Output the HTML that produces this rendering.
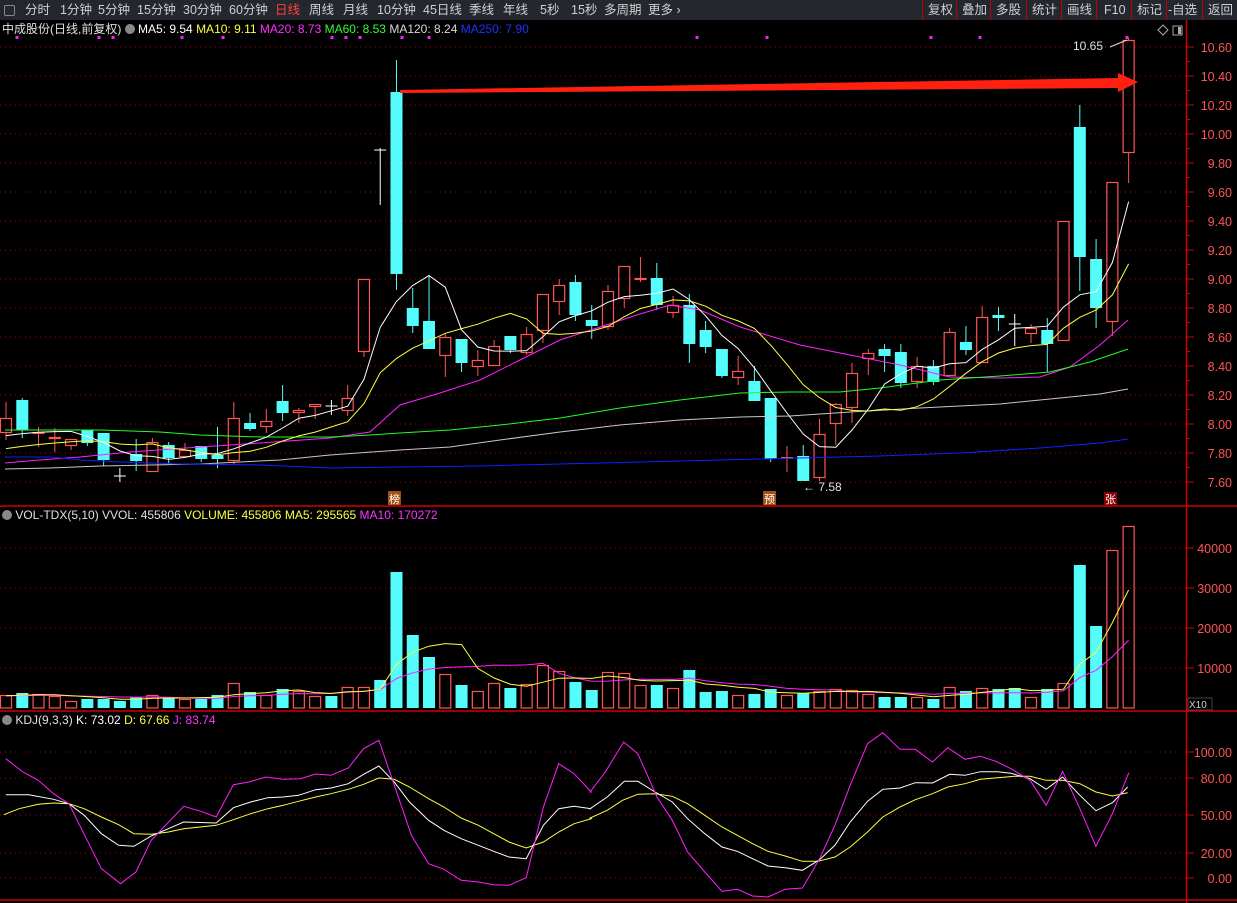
<!DOCTYPE html>
<html><head><meta charset="utf-8">
<style>
html,body{margin:0;padding:0;background:#000;width:1237px;height:903px;overflow:hidden;font-family:"Liberation Sans","Noto Sans CJK SC",sans-serif;}
#tbar{position:absolute;left:0;top:0;width:1237px;height:20px;background:#25272e;color:#d0d0d0;font-size:12.5px;line-height:20px;white-space:nowrap}
#tbar span{position:absolute;top:0}
.sep{position:absolute;top:0;width:1px;height:20px;background:#c00000}
.hdr{position:absolute;font-size:12px;white-space:nowrap;line-height:14px;z-index:2}
#holder{position:absolute;left:0;top:0;width:1237px;height:903px}
#holder svg{position:absolute;left:0;top:0}
</style></head><body>
<div id="holder"></div>
<div id="tbar">
<span style="left:4px;top:5px;width:9px;height:9px;border:1px solid #888;border-radius:2px;line-height:0"></span>
<span style="left:25px">分时</span><span style="left:60px">1分钟</span><span style="left:98px">5分钟</span><span style="left:137px">15分钟</span><span style="left:183px">30分钟</span><span style="left:229px">60分钟</span><span style="left:275px;color:#ff4040">日线</span><span style="left:309px">周线</span><span style="left:343px">月线</span><span style="left:377px">10分钟</span><span style="left:423px">45日线</span><span style="left:469px">季线</span><span style="left:503px">年线</span><span style="left:540px">5秒</span><span style="left:571px">15秒</span><span style="left:604px">多周期</span><span style="left:648px">更多 ›</span>
<div class="sep" style="left:922px"></div><span style="left:928px">复权</span>
<div class="sep" style="left:956px"></div><span style="left:962px">叠加</span>
<div class="sep" style="left:990px"></div><span style="left:996px">多股</span>
<div class="sep" style="left:1026px"></div><span style="left:1032px">统计</span>
<div class="sep" style="left:1061px"></div><span style="left:1067px">画线</span>
<div class="sep" style="left:1096px"></div><span style="left:1104px">F10</span>
<div class="sep" style="left:1131px"></div><span style="left:1137px">标记</span>
<div class="sep" style="left:1166px"></div><span style="left:1168px">-自选</span>
<div class="sep" style="left:1202px"></div><span style="left:1208px">返回</span>
</div>
<div class="hdr" style="left:2px;top:22px;color:#e0e0e0">中成股份(日线,前复权) <span style="display:inline-block;width:10px;height:10px;border-radius:5px;background:#888;vertical-align:-1px"></span> <span style="color:#fff">MA5: 9.54</span> <span style="color:#ffff40">MA10: 9.11</span> <span style="color:#ff30ff">MA20: 8.73</span> <span style="color:#30ff30">MA60: 8.53</span> <span style="color:#d8d8d8">MA120: 8.24</span> <span style="color:#2030ff">MA250: 7.90</span></div>
<div class="hdr" style="left:2px;top:508px;color:#e0e0e0"><span style="display:inline-block;width:10px;height:10px;border-radius:5px;background:#888;vertical-align:-1px"></span> VOL-TDX(5,10) VVOL: 455806 <span style="color:#ffff40">VOLUME: 455806 MA5: 295565</span> <span style="color:#ff30ff">MA10: 170272</span></div>
<div class="hdr" style="left:2px;top:713px;color:#e0e0e0"><span style="display:inline-block;width:10px;height:10px;border-radius:5px;background:#888;vertical-align:-1px"></span> KDJ(9,3,3) <span style="color:#fff">K: 73.02</span> <span style="color:#ffff40">D: 67.66</span> <span style="color:#ff30ff">J: 83.74</span></div>
<script>
(function(){
var s='';
function LN(x1,y1,x2,y2,c,w,d){s+='<line x1="'+x1+'" y1="'+y1+'" x2="'+x2+'" y2="'+y2+'" stroke="'+c+'" stroke-width="'+(w||1)+'"'+(d?' stroke-dasharray="'+d+'"':'')+'/>';}
function PL(pts,c,w){var a=[];for(var i=0;i<pts.length;i++){a.push((+pts[i][0]).toFixed(1)+','+(+pts[i][1]).toFixed(1));}s+='<polyline fill="none" stroke="'+c+'" stroke-width="'+(w||1)+'" points="'+a.join(' ')+'"/>';}
function TX(x,y,t,c,a,fs){s+='<text x="'+x+'" y="'+y+'" fill="'+c+'" font-size="'+(fs||12)+'" font-family="Liberation Sans, sans-serif"'+(a?' text-anchor="'+a+'"':'')+'>'+t+'</text>';}
function XP(i){return 6+16.27*i;}
function MAV(arr,n,pad){var r=[];for(var i=0;i<arr.length;i++){var sum=0;for(var j=i-n+1;j<=i;j++){sum+=(j<0?pad:arr[j]);}r.push([XP(i),sum/n]);}return r;}
var RED='#ff5555',CY='#54fcfc',GR='#b00000';
var i,y;
try{
for(y=47;y<=483;y+=29){LN(0,y,1186,y,GR,1,'1,4');}
[548,588,628,668].forEach(function(yy){LN(0,yy,1186,yy,GR,1,'1,4');});
[752,778,815,853,878].forEach(function(yy){LN(0,yy,1186,yy,GR,1,'1,4');});
var labs=['10.60','10.40','10.20','10.00','9.80','9.60','9.40','9.20','9.00','8.80','8.60','8.40','8.20','8.00','7.80','7.60'];
for(i=0;i<labs.length;i++){var yl=47+29*i;LN(1186,yl,1194,yl,'#d00000');TX(1232,yl+5,labs[i],RED,'end',12.5);}
for(y=47;y<=483;y+=14.5){LN(1186,y,1190,y,'#d00000');}
[['40000',548],['30000',588],['20000',628],['10000',668]].forEach(function(a){LN(1186,a[1],1194,a[1],'#d00000');TX(1232,a[1]+5,a[0],RED,'end',12.5);});
[['100.00',752],['80.00',778],['50.00',815],['20.00',853],['0.00',878]].forEach(function(a){LN(1186,a[1],1194,a[1],'#d00000');TX(1232,a[1]+5,a[0],RED,'end',12.5);});
s+='<rect x="1188" y="698" width="24" height="12" fill="#000" stroke="#888" stroke-width="0.5"/>';TX(1189,708,'X10','#d0d0d0',null,10);
LN(0,506,1237,506,'#d00000',1.5);LN(0,711,1237,711,'#d00000',1.5);LN(0,900,1237,900,'#d00000',1.5);
LN(1186.5,20,1186.5,903,'#d00000',1.5);
[17,99,113,182,223,332,346,360,402,429,697,767,931,980,1127].forEach(function(x){s+='<rect x="'+(x-1.5)+'" y="36" width="3" height="3" fill="#ff20ff"/>';});
}catch(e){}
var CD=[[418,433,402,440,'r'],[400,430,398,438,'c'],[433,434,427,447,'r'],[437,439,428,452,'r'],[439,446,439,450,'r'],[430,443,430,446,'c'],[433,460,433,466,'c'],[476,476,468,482,'w'],[454,461,439,471,'c'],[442,472,438,472,'r'],[445,458,442,465,'c'],[450,457,443,457,'r'],[446,459,446,462,'c'],[455,459,427,468,'c'],[418,461,402,465,'r'],[423,429,413,431,'c'],[421,427,409,433,'r'],[401,413,385,421,'c'],[410,413,408,423,'r'],[404,407,404,419,'r'],[406,406,400,415,'w'],[398,411,385,416,'r'],[279,352,279,357,'r'],[150,150,148,205,'w'],[92,274,60,290,'c'],
[308,326,288,333,'c'],[321,349,275,349,'c'],[337,356,334,377,'r'],[339,363,339,372,'c'],[360,367,350,376,'r'],[346,366,340,366,'r'],[336,350,336,353,'c'],[334,353,327,355,'r'],[294,331,294,343,'r'],[285,302,279,315,'r'],[282,315,275,321,'c'],[320,326,305,339,'c'],[291,327,285,330,'r'],[266,299,266,308,'r'],[278,280,257,282,'r'],[278,305,263,310,'c'],[305,313,296,318,'r'],[305,344,294,363,'c'],[330,347,321,353,'c'],[349,376,349,378,'c'],[371,378,356,385,'r'],[381,401,366,401,'c'],[398,459,398,462,'c'],[458,458,446,472,'r'],[456,481,445,481,'c'],
[434,478,419,481,'r'],[404,424,403,445,'r'],[373,408,363,423,'r'],[353,359,349,375,'r'],[349,356,344,372,'c'],[352,383,344,388,'c'],[366,382,357,388,'r'],[366,382,360,385,'c'],[332,376,328,376,'r'],[342,350,326,355,'c'],[317,363,306,363,'r'],[315,318,307,331,'c'],[324,324,314,346,'w'],[328,334,324,343,'r'],[330,344,318,372,'c'],[221,341,221,341,'r'],[127,257,105,291,'c'],[259,308,239,328,'c'],[182,322,182,336,'r'],[40,153,38,183,'r']];
var closes=[];
try{
for(i=0;i<CD.length;i++){var c=CD[i],x=XP(i),t=c[0],b=c[1],h=c[2],l=c[3],k=c[4];
 var col=k=='r'?RED:(k=='c'?CY:'#ffffff');
 closes.push(k=='c'?b:t);
 if(k=='c'){LN(x,h,x,l,col);s+='<rect x="'+(x-6)+'" y="'+t+'" width="12" height="'+Math.max(b-t,1)+'" fill="'+col+'"/>';}
 else if(k=='w'){LN(x,h,x,l,col);LN(x-6,t,x+6,t,col);}
 else{ if(h<t)LN(x,h,x,t,col); if(l>b)LN(x,b,x,l,col); if(b-t<=1){LN(x-6,t,x+6,t,col,2);} else {s+='<rect x="'+(x-5.5)+'" y="'+(t+0.5)+'" width="11" height="'+(b-t-1)+'" fill="none" stroke="'+col+'" stroke-width="1.2"/>';}}
}
}catch(e){}
try{
var mas=[[[[5,463],[40,460],[80,457],[130,452],[200,447],[260,443],[330,438],[370,432],[400,405],[440,393],[480,380],[520,360],[560,340],[600,327],[640,314],[670,305],[700,310],[740,327],[800,345],[850,355],[900,365],[950,377],[1000,378],[1040,377],[1070,367],[1100,345],[1128,320]],'#ff20ff'],
[[[5,430],[100,430],[160,432],[200,435],[260,437],[330,437],[370,435],[400,433],[450,430],[500,425],[560,418],[620,408],[680,400],[740,393],[790,392],[840,392],[880,388],[940,380],[1000,376],[1050,372],[1090,362],[1128,349]],'#20ff20'],
[[[5,469],[50,468],[100,466],[200,464],[280,460],[330,455],[400,450],[450,447],[500,440],[560,432],[620,425],[680,420],[740,417],[790,416],[850,412],[920,408],[1000,404],[1060,398],[1100,394],[1128,389]],'#c8c8c8'],
[[[5,457],[50,457],[80,460],[120,462],[180,464],[260,465],[330,468],[400,467],[480,466],[560,464],[640,462],[720,460],[800,458],[880,456],[960,453],[1040,448],[1100,443],[1128,439]],'#1020ff']];
for(i=0;i<mas.length;i++){PL(mas[i][0],mas[i][1]);}
PL(MAV(closes,10,452),'#ffff40');
PL(MAV(closes,5,440),'#ffffff');
s+='<polygon points="400,90 1118,78 1118,73 1138,82 1118,92 1118,88 400,93" fill="#ff2010"/>';
LN(1110,47,1127,40,'#e0e0e0');TX(1073,50,'10.65','#e0e0e0',null,12);
TX(803,491,'\u2190 7.58','#e0e0e0',null,12);
s+='<rect x="388" y="491" width="13" height="14" fill="#a05010"/>';TX(389,503,'榜','#fff',null,11);
s+='<rect x="763" y="491" width="13" height="14" fill="#a05010"/>';TX(764,503,'预','#fff',null,11);
s+='<rect x="1104" y="492" width="13" height="13" fill="#8a0000"/>';TX(1105,503,'张','#fff',null,11);
s+='<polygon points="1163,25 1168,30 1163,35 1158,30" fill="none" stroke="#aaa"/><rect x="1173" y="26" width="9" height="9" fill="none" stroke="#aaa"/><rect x="1178" y="27" width="3" height="7" fill="#aaa"/>';
}catch(e){}
try{
var V=[695,693,694,696,701,699,699,701,697,695,698,699,699,695,683,692,695,689,691,696,696,687,687,680,572,635,657,674,685,691,683,688,684,665,671,682,690,672,673,685,685,688,670,692,691,695,694,689,695,693,691,689,690,694,697,697,697,699,687,691,688,689,688,697,689,683,565,626,550,526];
for(i=0;i<V.length;i++){var vt=V[i],vx=XP(i),vk=CD[i][4];
 if(vk=='c'||vk=='w'){s+='<rect x="'+(vx-6)+'" y="'+vt+'" width="12" height="'+(708-vt)+'" fill="'+CY+'"/>';}
 else{s+='<rect x="'+(vx-5.5)+'" y="'+(vt+0.5)+'" width="11" height="'+(708-vt-0.5)+'" fill="none" stroke="'+RED+'" stroke-width="1.2"/>';}}
PL(MAV(V,10,696),'#ff20ff');PL(MAV(V,5,696),'#ffff40');
}catch(e){}
try{
function conv(a,off){var r=[];for(var q=0;q<a.length;q++){r.push([a[q][0]/2.613+off,a[q][1]/3+712]);}return r;}
var J1=[[15,140],[60,180],[100,205],[140,245],[180,275],[265,470],[315,515],[355,480],[395,385],[480,283],[525,298],[565,315],[610,218],[650,210],[695,195],[740,202],[785,200],[825,186],[865,190],[910,168],[950,110],[990,85],[1075,370],[1120,455],[1160,472],[1205,505],[1250,510],[1290,518],[1330,520],[1375,497],[1420,285],[1460,155],[1500,185],[1545,240]];
var J2=[[0,240],[40,180],[88,90],[125,125],[175,255],[215,325],[255,420],[300,480],[345,538],[385,532],[425,552],[465,555],[510,532],[555,528],[600,440],[640,340],[680,220],[725,95],[765,62],[810,112],[850,112],[895,150],[935,107],[980,142],[1020,133],[1060,148],[1100,170],[1150,205],[1192,280],[1235,178],[1280,290],[1322,403],[1365,305],[1408,182]];
var K1=[[15,248],[75,248],[140,262],[180,275],[220,310],[265,365],[310,400],[350,403],[395,372],[440,350],[480,330],[565,333],[610,287],[655,270],[700,257],[740,255],[780,250],[825,233],[865,228],[910,215],[950,187],[990,162],[1030,210],[1070,270],[1120,325],[1160,355],[1205,380],[1250,400],[1290,418],[1330,435],[1375,440],[1420,340],[1460,290],[1500,283],[1545,290]];
var K2=[[0,290],[45,255],[90,208],[125,208],[170,240],[215,270],[255,320],[300,365],[345,405],[385,418],[425,440],[465,462],[510,467],[555,475],[600,443],[640,400],[680,330],[725,268],[765,232],[810,228],[850,212],[895,213],[940,187],[980,190],[1020,179],[1065,179],[1100,184],[1150,200],[1192,232],[1235,195],[1280,250],[1322,296],[1365,272],[1405,225]];
var D1=[[10,308],[50,290],[100,277],[140,273],[180,275],[220,290],[265,315],[310,338],[350,365],[395,367],[440,360],[480,350],[565,340],[610,323],[655,305],[700,290],[740,280],[780,268],[825,255],[865,245],[910,232],[950,217],[990,198],[1030,202],[1070,225],[1120,260],[1160,285],[1205,318],[1250,340],[1290,365],[1330,390],[1375,408],[1420,390],[1460,360],[1500,335],[1545,320]];
var D2=[[0,318],[45,295],[85,265],[125,247],[170,245],[215,253],[255,275],[300,310],[345,345],[385,370],[425,395],[465,418],[510,432],[555,448],[595,448],[640,435],[680,405],[725,360],[765,315],[810,285],[850,263],[895,245],[935,225],[980,215],[1020,202],[1065,197],[1110,193],[1150,193],[1192,205],[1235,205],[1280,215],[1322,240],[1365,252],[1405,242]];
PL(conv(D1,0).concat(conv(D2,590)),'#ffff40');
PL(conv(K1,0).concat(conv(K2,590)),'#ffffff');
PL(conv(J1,0).concat(conv(J2,590)),'#ff20ff');
}catch(e){}
document.getElementById('holder').innerHTML='<svg xmlns="http://www.w3.org/2000/svg" width="1237" height="903">'+s+'</svg>';
})();
</script>
</body></html>
